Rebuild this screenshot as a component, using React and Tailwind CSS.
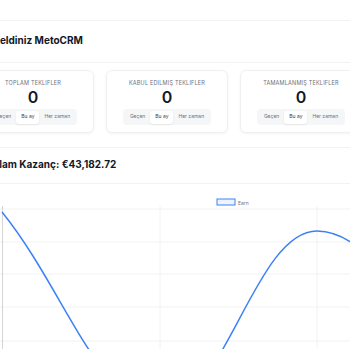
import React from 'react';

const stats = [
  { label: 'Toplam Teklifler', value: 0 },
  { label: 'Kabul Edilmiş Teklifler', value: 0 },
  { label: 'Tamamlanmış Teklifler', value: 0 },
];

const ranges = ['Geçen', 'Bu ay', 'Her zaman'];

const StatCard = ({ label, value }) => (
  <div className="bg-white rounded-md border border-[#eef0f3] shadow-[0_1px_3px_rgba(0,0,0,0.05)] h-[63px] flex flex-col items-center pt-[8px]">
    <p className="text-[5.5px] leading-[8px] uppercase tracking-[0.2px] text-[#6b7280]">{label}</p>
    <p className="text-[16px] leading-[18px] font-semibold text-[#111827] mt-[1px]">{value}</p>
    <div className="mt-[3px] flex items-center bg-[#f5f6f8] rounded-[4px] px-[2px] h-[16px]">
      {ranges.map((r) => (
        <span
          key={r}
          className={
            r === 'Bu ay'
              ? 'text-[5px] px-[5px] h-[13px] flex items-center rounded-[3px] bg-white text-[#374151] shadow-[0_1px_2px_rgba(0,0,0,0.08)]'
              : 'text-[5px] px-[5px] h-[13px] flex items-center text-[#6b7280]'
          }
        >
          {r}
        </span>
      ))}
    </div>
  </div>
);

const EarnChart = () => (
  <svg width="350" height="165" viewBox="0 0 350 165" className="block">
    <rect x="217" y="15" width="18" height="6" fill="#eef4ff" stroke="#3b82f6" strokeWidth="1" />
    <text x="238" y="20.5" fontSize="5" fill="#6b7280" fontFamily="Inter, sans-serif">Earn</text>
    {[25, 58, 90, 123, 157].map((y) => (
      <line key={y} x1="0" x2="350" y1={y} y2={y} stroke="#f2f2f2" strokeWidth="1" />
    ))}
    {[160, 317].map((x) => (
      <line key={x} x1={x} x2={x} y1="22" y2="165" stroke="#f2f2f2" strokeWidth="1" />
    ))}
    <line x1="2.5" x2="2.5" y1="22" y2="165" stroke="#d4d4d4" strokeWidth="1" />
    <path
      d="M2,28 C65,106 97,219 160,223 C223,227 254,47 317,47 C380,47 411,153 474,223"
      fill="none"
      stroke="#3b82f6"
      strokeWidth="1.5"
    />
  </svg>
);

export default function App() {
  return (
    <div className="w-[350px] h-[350px] overflow-hidden bg-white font-['Inter',sans-serif]">
      <div className="h-[20px]" />
      <div className="h-[43px] border-y border-[#f2f2f2] flex items-center pb-[3px]">
        <h1 className="-ml-[28px] text-[10px] font-bold text-[#111827] whitespace-nowrap">Hoş geldiniz MetoCRM</h1>
      </div>
      <div className="w-[390px] -ml-[28px] mt-[7px] grid grid-cols-3 gap-3">
        {stats.map((s) => (
          <StatCard key={s.label} {...s} />
        ))}
      </div>
      <div className="mt-[14px] h-[37px] border-y border-[#f2f2f2] flex items-center pb-[3px]">
        <h2 className="-ml-[19px] text-[10px] font-bold text-[#111827] whitespace-nowrap">Toplam Kazanç: €43,182.72</h2>
      </div>
      <EarnChart />
    </div>
  );
}
